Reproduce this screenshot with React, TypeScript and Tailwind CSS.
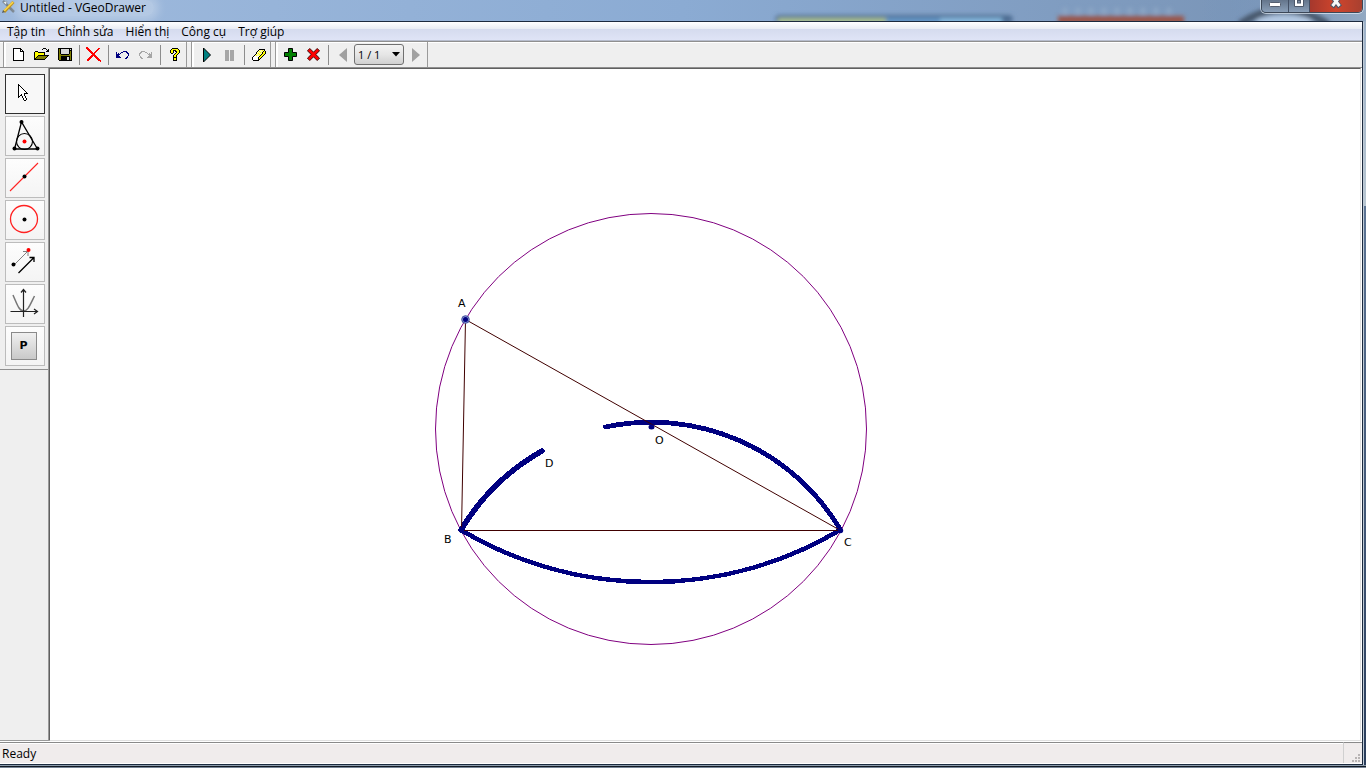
import type { ReactNode } from 'react';

const palette: Record<string, string> = {
  K: '#000000',
  W: '#ffffff',
  Y: '#ffff00',
  P: '#ffff99',
  O: '#808000',
  L: '#d8d8d8',
  N: '#000080',
  G: '#a6a6a6',
  R: '#ff0000',
};

function Pixels({ rows }: { rows: string[] }) {
  const width = Math.max(...rows.map((r) => r.length));
  return (
    <svg width={width} height={rows.length} shapeRendering="crispEdges" aria-hidden="true">
      {rows.flatMap((row, y) =>
        row.split('').map((c, x) =>
          palette[c] ? <rect key={`${x}-${y}`} x={x} y={y} width="1" height="1" fill={palette[c]} /> : null,
        ),
      )}
    </svg>
  );
}

const newRows = [
  'KKKKKKKK...',
  'KWWWWWWKK..',
  'KWWWWWWKWK.',
  'KWWWWWWKKKK',
  'KWWWWWWWWWK',
  'KWWWWWWWWWK',
  'KWWWWWWWWWK',
  'KWWWWWWWWWK',
  'KWWWWWWWWWK',
  'KWWWWWWWWWK',
  'KWWWWWWWWWK',
  'KWWWWWWWWWK',
  'KKKKKKKKKKK',
];
const openRows = [
  '.........KKK....',
  '........K...K.K.',
  '.............KK.',
  '.KKK........KKK.',
  'KYYYKKKKKKK.....',
  'KYYYYYYYYYK.....',
  'KYYYYYYYYYK.....',
  'KYYYKKKKKKKKKKK.',
  'KYYKOOOOOOOOOK..',
  'KYKOOOOOOOOOK...',
  'KKOOOOOOOOOK....',
  'KKKKKKKKKKK.....',
  '................',
];
const saveRows = [
  'KKKKKKKKKKKKKK',
  'KOKLLLLLLLLKLK',
  'KOKLLLLLLLLKKK',
  'KOKLLLLLLLLKOK',
  'KOKLLLLLLLLKOK',
  'KOKLLLLLLLLKOK',
  'KOOKKKKKKKKOOK',
  'KOOOOOOOOOOOOK',
  'KOOKKKKKKKKKOK',
  'KOOKKKKKKLLKOK',
  'KOOKKKKKKLLKOK',
  'KOOKKKKKKLLKOK',
  '.KKKKKKKKKKKKK',
];
const deleteRows = [
  'RR.............',
  'RRR.........RR.',
  '.RRR.......RR..',
  '..RRR.....RR...',
  '...RRR...RR....',
  '....RRR.RR.....',
  '.....RRRR......',
  '......RRR......',
  '.....RRRRR.....',
  '....RRR.RRR....',
  '...RRR...RRR...',
  '..RRR.....RRR..',
  '.RRR.......RRR.',
  '.RR.........RRR',
  '..............R',
];
const undoRows = [
  '.......NNNN..',
  'N....NN...NN.',
  'N.N.N......NN',
  'NNNN........N',
  'NNN.........N',
  'NNNN.......N.',
  'NNNNN.....NN.',
  '.........NN..',
];
const redoRows = undoRows.map((r) => r.replace(/N/g, 'G').split('').reverse().join(''));
const helpRows = [
  '..KKKKKK..',
  '.KYYYYYYK.',
  'KYYKKKYYYK',
  'KYYK.KKYYK',
  'KYYK..KYYK',
  '.KK..KYYK.',
  '....KYYK..',
  '...KYYK...',
  '...KYYK...',
  '...KKKK...',
  '...KYYK...',
  '...KYYK...',
  '...KKKK...',
];
const eraserRows = [
  '.......KKKKKK.',
  '......KPPPYPK.',
  '.....KPYPPPKYK',
  '....KPPPYPKYYK',
  '....KPYPPPKYYK',
  '...KPPPYPKYYK.',
  '..KPYPPPKYYK..',
  '.KWWWWWKYYK...',
  'KWWWWWKYYK....',
  'KWWWWWKYK.....',
  'KWWWWWKK......',
  '.KKKKKK.......',
];
const arrowRows = [
  'K.........',
  'KK........',
  'KWK.......',
  'KWWK......',
  'KWWWK.....',
  'KWWWWK....',
  'KWWWWWK...',
  'KWWWWWWK..',
  'KWWWWWWWK.',
  'KWWWWWKKKK',
  'KWWKWWK...',
  'KWKKWWK...',
  'KK..KWWK..',
  'K...KWWK..',
  '.....KWWK.',
  '.....KWWK.',
  '......KK..',
];

function BarButton({ label, children, disabled }: { label: string; children: ReactNode; disabled?: boolean }) {
  return (
    <button
      type="button"
      aria-label={label}
      disabled={disabled}
      className="flex h-[22px] w-[23px] shrink-0 items-center justify-center"
    >
      {children}
    </button>
  );
}

function Separator() {
  return (
    <div className="flex w-[6px] shrink-0 justify-center">
      <div className="h-[20px] w-px bg-[#8c8c8c]" />
    </div>
  );
}

function BarGroup({ label, children }: { label: string; children: ReactNode }) {
  return (
    <div role="toolbar" aria-label={label} className="flex h-full items-center border-r border-[#9a9a9a]">
      <div className="mr-px h-full w-[3px] border-l border-[#9a9a9a] bg-white" />
      {children}
    </div>
  );
}

const menus = ['Tập tin', 'Chỉnh sửa', 'Hiển thị', 'Công cụ', 'Trợ giúp'];

const tools: { label: string; icon: ReactNode }[] = [
  { label: 'Chọn', icon: <Pixels rows={arrowRows} /> },
  {
    label: 'Tam giác',
    icon: (
      <svg width="38" height="38" fill="none" stroke="#000" aria-hidden="true">
        <path d="M15.500 5L8.500 32H31.500Z" strokeWidth="1.300" />
        <circle cx="18.500" cy="24.500" r="8" strokeWidth="1.100" />
        <g stroke="none" fill="#000">
          <circle cx="15.500" cy="5" r="2" />
          <circle cx="8.500" cy="31.500" r="2" />
          <circle cx="31.500" cy="31.500" r="2" />
          <circle cx="18.500" cy="24.500" r="2" fill="#f00" />
        </g>
      </svg>
    ),
  },
  {
    label: 'Đường thẳng',
    icon: (
      <svg width="38" height="38" fill="none" aria-hidden="true">
        <path d="M4 32L32 4" stroke="#f22" strokeWidth="1.100" />
        <circle cx="18.500" cy="17.500" r="2" fill="#000" />
      </svg>
    ),
  },
  {
    label: 'Đường tròn',
    icon: (
      <svg width="38" height="38" fill="none" aria-hidden="true">
        <circle cx="18" cy="18" r="13.500" stroke="#f22" strokeWidth="1.300" />
        <circle cx="18.500" cy="18.500" r="2" fill="#000" />
      </svg>
    ),
  },
  {
    label: 'Tịnh tiến',
    icon: (
      <svg width="38" height="38" fill="none" aria-hidden="true">
        <path d="M8 22L21 9M17 8.500H22V13" stroke="#808080" />
        <path d="M12.500 30L28 14.500M23.500 14.500H28V19" stroke="#000" strokeWidth="1.300" />
        <circle cx="7.500" cy="21.500" r="2" fill="#000" />
        <circle cx="22.500" cy="7" r="2" fill="#f00" />
      </svg>
    ),
  },
  {
    label: 'Đồ thị',
    icon: (
      <svg width="38" height="38" fill="none" aria-hidden="true">
        <path d="M7 10C11 19 13 26 17.500 26S24 20 28.500 11" stroke="#777" strokeWidth="1.500" />
        <path d="M4.500 26.500H31M28 24L31.500 26.500L28 29M17.500 32V5M15 7.500L17.500 4.500L20 7.500" stroke="#222" strokeWidth="1.200" />
      </svg>
    ),
  },
  {
    label: 'Chế độ P',
    icon: (
      <span className="mr-[2px] flex h-[28px] w-[26px] items-center justify-center border border-[#8a8a8a] bg-linear-to-b from-[#f0f0f0] to-[#c9c9c9] font-['DejaVu_Sans',sans-serif] text-[11px] leading-[14px] font-bold text-black">
        P
      </span>
    ),
  },
];

function TitleBar() {
  return (
    <header className="relative flex h-[21px] shrink-0 items-start justify-between bg-linear-to-r from-[#9fbadd] via-[#8babd3] to-[#7791b2]">
      <svg className="absolute top-0 right-0" width="666" height="21" aria-hidden="true">
        <defs>
          <filter id="soft" x="-20%" y="-60%" width="140%" height="220%">
            <feGaussianBlur stdDeviation="2" />
          </filter>
          <linearGradient id="edge">
            <stop offset="0" stopColor="#6f93bf" stopOpacity="0" />
            <stop offset="1" stopColor="#93a9c2" />
          </linearGradient>
        </defs>
        <rect x="500" y="0" width="166" height="21" fill="url(#edge)" />
        <g filter="url(#soft)">
          <rect x="75" y="15" width="238" height="8" rx="5" fill="#4e6d93" />
          <rect x="78" y="18" width="108" height="6" fill="#a9bf8e" />
          <rect x="186" y="18" width="54" height="6" fill="#6597c8" />
          <rect x="240" y="18" width="62" height="6" fill="#84b8de" />
          <rect x="358" y="16" width="126" height="8" fill="#9a5548" />
          <path d="M365 8V14M378 8V14M391 8V14M404 8V14M417 8V14M430 8V14M443 8V14M456 8V14M469 8V14" stroke="#90a9c6" strokeWidth="4" />
          <path d="M540 24Q582 -4 628 24" stroke="#46566a" strokeWidth="7" fill="none" />
          <ellipse cx="584" cy="22" rx="28" ry="7" fill="#b2c8e2" />
        </g>
      </svg>
      <div className="relative flex items-start gap-[5px] pl-[2px]">
        <svg width="13" height="14" fill="none" aria-hidden="true">
          <path d="M1 1L12 12" stroke="#78838d" strokeWidth="2.500" />
          <path d="M1 2L5 1L4 5Z" fill="#e6edf0" stroke="#77858f" strokeWidth="0.500" />
          <path d="M11.500 2L2 12" stroke="#bd911f" strokeWidth="3" />
          <path d="M11 2L2 11" stroke="#fad647" strokeWidth="1.700" />
          <path d="M0 13L1 10L3 12Z" fill="#585c58" />
        </svg>
        <h1 className="rounded-full bg-white/25 pr-2 text-[12px] leading-[16px] text-black shadow-[0_0_8px_5px_rgba(255,255,255,0.25)]">
          Untitled - VGeoDrawer
        </h1>
      </div>
      <div className="relative mr-[3px] flex h-[13px] overflow-hidden rounded-b-[5px] border border-t-0 border-[#3c4858] shadow-[0_0_0_1px_rgba(225,235,245,0.7)]">
        <button type="button" aria-label="Thu nhỏ" className="flex h-full w-[27px] justify-center border-r border-[#435065] bg-linear-to-b from-[#64758b] to-[#8a9fb8]">
          <svg width="14" height="12" aria-hidden="true">
            <rect x="1.500" y="2.500" width="11" height="4" rx="1" fill="#fff" stroke="#555f70" />
          </svg>
        </button>
        <button type="button" aria-label="Phóng to" className="flex h-full w-[21px] justify-center border-r border-[#435065] bg-linear-to-b from-[#64758b] to-[#8a9fb8]">
          <svg width="12" height="12" aria-hidden="true">
            <path d="M1.500 -3H10.500V6.500H1.500Z" fill="#fff" stroke="#4d586a" />
            <rect x="4.500" y="0.500" width="3" height="2.500" fill="#77879d" stroke="#4d586a" />
          </svg>
        </button>
        <button type="button" aria-label="Đóng" className="flex h-full w-[52px] justify-center bg-[linear-gradient(90deg,#a5382d,#cf452c_50%,#a84030)] pr-[14px]">
          <svg className="ml-[14px] shrink-0" width="16" height="12" fill="none" aria-hidden="true">
            <path d="M3 -5L12 7M13 -5L4 7" stroke="#4d5565" strokeWidth="5" />
            <path d="M3 -5L11.500 6M13 -5L4.500 6" stroke="#f7f7f7" strokeWidth="3" />
          </svg>
        </button>
      </div>
    </header>
  );
}

function Drawing() {
  return (
    <svg className="block h-full w-full" role="img" aria-label="Tam giác ABC nội tiếp đường tròn tâm O">
      <g transform="translate(-50 -69)" fill="none">
        <circle cx="651" cy="429" r="215.500" stroke="#800080" strokeWidth="1" />
        <g stroke="#000080" shapeRendering="crispEdges" strokeLinecap="round">
          <path d="M461 530A220 220 0 0 1 542 451" strokeWidth="5.500" />
          <path d="M605.500 427A220 220 0 0 1 840 529" strokeWidth="4.800" />
          <path d="M461 530A371 371 0 0 0 840 530" strokeWidth="4.600" />
        </g>
        <g stroke="#400000" strokeWidth="1">
          <path d="M465.500 319.500L461.500 530.500" />
          <path d="M465.500 319.500L840.500 530.500" />
          <path d="M461 530.500H841" />
        </g>
        <g fill="#000080">
          <circle cx="465.500" cy="319.500" r="3.800" fill="#8792ca" stroke="#4250a0" />
          <circle cx="465.500" cy="319.500" r="2.500" />
          <circle cx="461.500" cy="530" r="2.700" />
          <circle cx="840.500" cy="530.500" r="2.700" />
          <ellipse cx="651.500" cy="427" rx="3" ry="2.500" />
        </g>
        <g fill="#000" fontFamily="'DejaVu Sans', sans-serif" fontSize="11">
          <text x="458" y="307">A</text>
          <text x="444" y="543">B</text>
          <text x="844" y="546">C</text>
          <text x="545" y="467">D</text>
          <text x="655" y="444">O</text>
        </g>
      </g>
    </svg>
  );
}

export default function App() {
  return (
    <div className="flex h-screen flex-col overflow-hidden bg-[#8494a8] font-['Open_Sans','Noto_Sans',sans-serif] text-[12px] text-black">
      <TitleBar />
      <div className="flex min-h-0 flex-1 bg-[linear-gradient(180deg,#9db1c8,#b8c6d1_185px,#5d7595_185px,#2b3e5c)] pr-[3px]">
        <div className="flex min-w-0 flex-1 flex-col border-t border-r border-b border-[#1c2a3e] bg-[#efefef] shadow-[1px_1px_0_#c0cbd6]">
          <nav aria-label="Menu" className="h-[19px] shrink-0 border-b border-[#b6bccc] bg-[linear-gradient(180deg,#ffffff,#e8ecf4_7px,#d5dbee_7px,#dfe4f6)]">
            <ul className="flex h-full items-center gap-[12px] pl-[7px]">
              {menus.map((m) => (
                <li key={m}>
                  <button type="button" className="block pt-px leading-[18px] whitespace-nowrap">{m}</button>
                </li>
              ))}
            </ul>
          </nav>
          <div className="flex h-[27px] shrink-0 items-stretch gap-[4px] border-t border-b border-t-[#8f8f8f] border-b-[#8f8f8f] bg-[#efefef] pl-[3px] shadow-[inset_0_1px_0_#fff]">
            <BarGroup label="Tập tin">
              <BarButton label="Mới"><Pixels rows={newRows} /></BarButton>
              <BarButton label="Mở"><Pixels rows={openRows} /></BarButton>
              <BarButton label="Lưu"><Pixels rows={saveRows} /></BarButton>
              <Separator />
              <BarButton label="Xóa"><Pixels rows={deleteRows} /></BarButton>
              <Separator />
              <BarButton label="Hoàn tác"><Pixels rows={undoRows} /></BarButton>
              <BarButton label="Làm lại" disabled><Pixels rows={redoRows} /></BarButton>
              <Separator />
              <BarButton label="Trợ giúp"><Pixels rows={helpRows} /></BarButton>
            </BarGroup>
            <BarGroup label="Hoạt hình">
              <BarButton label="Chạy">
                <svg width="10" height="16" aria-hidden="true">
                  <path d="M1.500 1L8.500 8L1.500 15Z" fill="#008080" stroke="#000" />
                </svg>
              </BarButton>
              <BarButton label="Tạm dừng" disabled>
                <svg width="10" height="12" aria-hidden="true">
                  <path d="M0 1H4V12H0ZM5 1H9V12H5Z" fill="#a6a6a6" />
                </svg>
              </BarButton>
              <Separator />
              <BarButton label="Tẩy"><Pixels rows={eraserRows} /></BarButton>
            </BarGroup>
            <BarGroup label="Trang">
              <BarButton label="Thêm trang">
                <svg width="13" height="13" aria-hidden="true">
                  <path d="M4.500 0.500H8.500V4.500H12.500V8.500H8.500V12.500H4.500V8.500H0.500V4.500H4.500Z" fill="#008000" stroke="#000" />
                </svg>
              </BarButton>
              <BarButton label="Xóa trang">
                <svg width="13" height="13" viewBox="0 0 14 14" aria-hidden="true">
                  <path d="M3 0.500L7 4.500L11 0.500L13.500 3L9.500 7L13.500 11L11 13.500L7 9.500L3 13.500L0.500 11L4.500 7L0.500 3Z" fill="#f00" stroke="#300" />
                </svg>
              </BarButton>
              <Separator />
              <BarButton label="Trang trước" disabled>
                <svg width="8" height="14" aria-hidden="true"><path d="M8 0V14L0 7Z" fill="#a0a0a0" /></svg>
              </BarButton>
              <div className="relative">
                <select
                  aria-label="Trang hiện tại"
                  className="block h-[21px] w-[50px] appearance-none rounded-[3px] border border-[#707070] bg-linear-to-b from-[#f3f3f3] via-[#e6e6e6] to-[#d0d0d0] pl-[3px] text-[11px] leading-[19px] text-black"
                >
                  <option>1 / 1</option>
                </select>
                <svg className="pointer-events-none absolute top-[8px] right-[4px]" width="8" height="5" aria-hidden="true">
                  <path d="M0 0H8L4 4.500Z" fill="#000" />
                </svg>
              </div>
              <BarButton label="Trang sau" disabled>
                <svg width="8" height="14" aria-hidden="true"><path d="M0 0V14L8 7Z" fill="#a0a0a0" /></svg>
              </BarButton>
            </BarGroup>
          </div>
          <div className="flex min-h-0 flex-1">
            <aside aria-label="Công cụ vẽ" className="w-[49px] shrink-0 border-r border-b border-[#9a9a9a] bg-[#efefef]">
              <div className="flex flex-col items-center gap-[2px] border-b border-[#8f8f8f] pt-[6px] pr-px pb-[3px] pl-[2px]">
                {tools.map((t, i) => (
                  <button
                    key={t.label}
                    type="button"
                    aria-label={t.label}
                    aria-pressed={i === 0}
                    className={
                      i === 0
                        ? 'flex h-[40px] w-[40px] items-center justify-center border border-[#303030] bg-[#f8f8f8] pr-[4px] pb-[4px]'
                        : 'flex h-[40px] w-[40px] items-center justify-center border border-[#bcbcbc] bg-linear-to-b from-[#fdfdfd] to-[#f4f4f4]'
                    }
                  >
                    {t.icon}
                  </button>
                ))}
              </div>
            </aside>
            <main className="min-w-0 flex-1 border border-t-[#606060] border-r-[#e0e0e0] border-b-[#e0e0e0] border-l-[#606060] bg-white">
              <Drawing />
            </main>
            <div className="w-px bg-white" />
          </div>
          <footer className="flex h-[23px] shrink-0 items-stretch border-t border-b border-t-white border-b-white bg-[#f0ecec]">
            <div className="flex flex-1 items-center border-t border-[#8a8a8a] pt-[2px] pl-[2px] shadow-[inset_0_1px_0_#fff]">Ready</div>
            <div className="flex w-[19px] items-end justify-end border-t border-l border-t-[#8a8a8a] border-l-[#d0d0d0] pr-px">
              <svg width="9" height="9" fill="#b8b4b4" aria-hidden="true">
                <path d="M6 0H8V2H6ZM3 3H5V5H3ZM6 3H8V5H6ZM0 6H2V8H0ZM3 6H5V8H3ZM6 6H8V8H6Z" />
              </svg>
            </div>
          </footer>
        </div>
      </div>
      <div className="h-[3px] shrink-0 border-t border-b border-t-[#8b9bab] border-b-[#778495] bg-[#131a24]" />
    </div>
  );
}
